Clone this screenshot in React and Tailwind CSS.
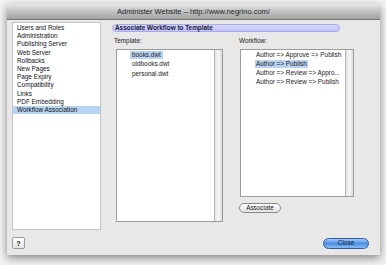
import React from "react";

const sideItems = [
  "Users and Roles",
  "Administration",
  "Publishing Server",
  "Web Server",
  "Rollbacks",
  "New Pages",
  "Page Expiry",
  "Compatibility",
  "Links",
  "PDF Embedding",
  "Workflow Association",
];

const templates = ["books.dwt", "oldbooks.dwt", "personal.dwt"];

const workflows = [
  "Author => Approve => Publish",
  "Author => Publish",
  "Author => Review => Appro...",
  "Author => Review => Publish",
];

const Scrollbar = () => (
  <div className="w-[8px] h-full border-l border-[#b5b5b5] bg-gradient-to-r from-[#e4e4e4] via-[#f6f6f6] to-[#dcdcdc]" />
);

export default function App() {
  return (
    <div
      className="w-[386px] h-[265px] bg-[#f2f2f2] pl-[7px] pt-[4px] overflow-hidden"
      style={{ fontFamily: '"Liberation Sans", Arial, sans-serif' }}>
      {/* Window */}
      <div className="w-[373px] h-[251px] bg-[#e8e8e8] flex flex-col shadow-[0_3px_8px_rgba(0,0,0,0.45)] rounded-t-[3px]">
        {/* Title bar */}
        <div className="h-[16px] rounded-t-[3px] bg-gradient-to-b from-[#e6e6e6] via-[#c2c2c2] to-[#a2a2a2] border-b border-[#747474] flex items-center justify-center">
          <span className="text-[7.5px] leading-none text-[#222]">Administer Website – http://www.negrino.com/</span>
        </div>

        {/* Main */}
        <div className="flex pl-[5px] pt-[2px]">
          {/* Sidebar */}
          <div className="w-[89px] h-[208px] bg-white border border-[#c4c4c4] pt-[1px]">
            {sideItems.map((item) => (
              <div
                key={item}
                className={`h-[8.2px] leading-[8.2px] pl-[4px] text-[6.4px] text-[#111] whitespace-nowrap ${
                  item === "Workflow Association" ? "bg-[#b9d3f3]" : ""
                }`}>
                {item}
              </div>
            ))}
          </div>

          {/* Right panel */}
          <div className="ml-[11px] pt-[2px] flex flex-col">
            <div className="w-[228px] h-[8px] rounded-full bg-gradient-to-b from-[#d6d6ff] to-[#c2c2fb] border border-[#a9a9e6] flex items-center pl-[2px]">
              <span className="text-[6.4px] font-bold leading-none text-[#1a1a3a]">Associate Workflow to Template</span>
            </div>

            <div className="flex mt-[5px]">
              {/* Template column */}
              <div className="ml-[2px] flex flex-col">
                <span className="text-[6.4px] leading-[8px] text-[#222]">Template:</span>
                <div className="ml-[2px] mt-[4px] w-[107px] h-[173px] bg-white border border-[#9c9c9c] flex">
                  <div className="flex-1 pl-[13px]">
                    {templates.map((t) => (
                      <div key={t} className="h-[9.5px] flex items-center">
                        <span
                          className={`px-[2px] text-[6.4px] leading-[8px] text-[#222] ${t === "books.dwt" ? "bg-[#b9d3f3]" : ""}`}>
                          {t}
                        </span>
                      </div>
                    ))}
                  </div>
                  <Scrollbar />
                </div>
              </div>

              {/* Workflow column */}
              <div className="ml-[16px] flex flex-col">
                <span className="text-[6.4px] leading-[8px] text-[#222]">Workflow:</span>
                <div className="ml-[1px] mt-[4px] w-[114px] h-[148px] bg-white border border-[#9c9c9c] flex">
                  <div className="flex-1 pl-[14px]">
                    {workflows.map((w) => (
                      <div key={w} className="h-[9px] flex items-center">
                        <span
                          className={`px-[1px] text-[6.4px] leading-[8px] text-[#222] whitespace-nowrap ${
                            w === "Author => Publish" ? "bg-[#b9d3f3]" : ""
                          }`}>
                          {w}
                        </span>
                      </div>
                    ))}
                  </div>
                  <Scrollbar />
                </div>
                <button className="mt-[6px] w-[42px] h-[10px] rounded-full border border-[#8a8a8a] bg-gradient-to-b from-white to-[#e2e2e2] flex items-center justify-center">
                  <span className="text-[6.4px] leading-none text-[#222]">Associate</span>
                </button>
              </div>
            </div>
          </div>
        </div>

        {/* Bottom row */}
        <div className="flex items-center justify-between pl-[5px] pr-[11px] mt-[7px]">
          <button className="w-[13px] h-[12px] rounded-[2px] border border-[#9a9a9a] bg-gradient-to-b from-white to-[#e6e6e6] flex items-center justify-center">
            <span className="text-[7px] font-bold leading-none text-[#222]">?</span>
          </button>
          <button className="w-[46px] h-[11px] rounded-full border border-[#2f5aa3] bg-gradient-to-b from-[#a3c9f7] via-[#4d8fe3] to-[#86bcf3] flex items-center justify-center">
            <span className="text-[6.5px] leading-none text-[#0d1d3a]">Close</span>
          </button>
        </div>
      </div>
    </div>
  );
}
